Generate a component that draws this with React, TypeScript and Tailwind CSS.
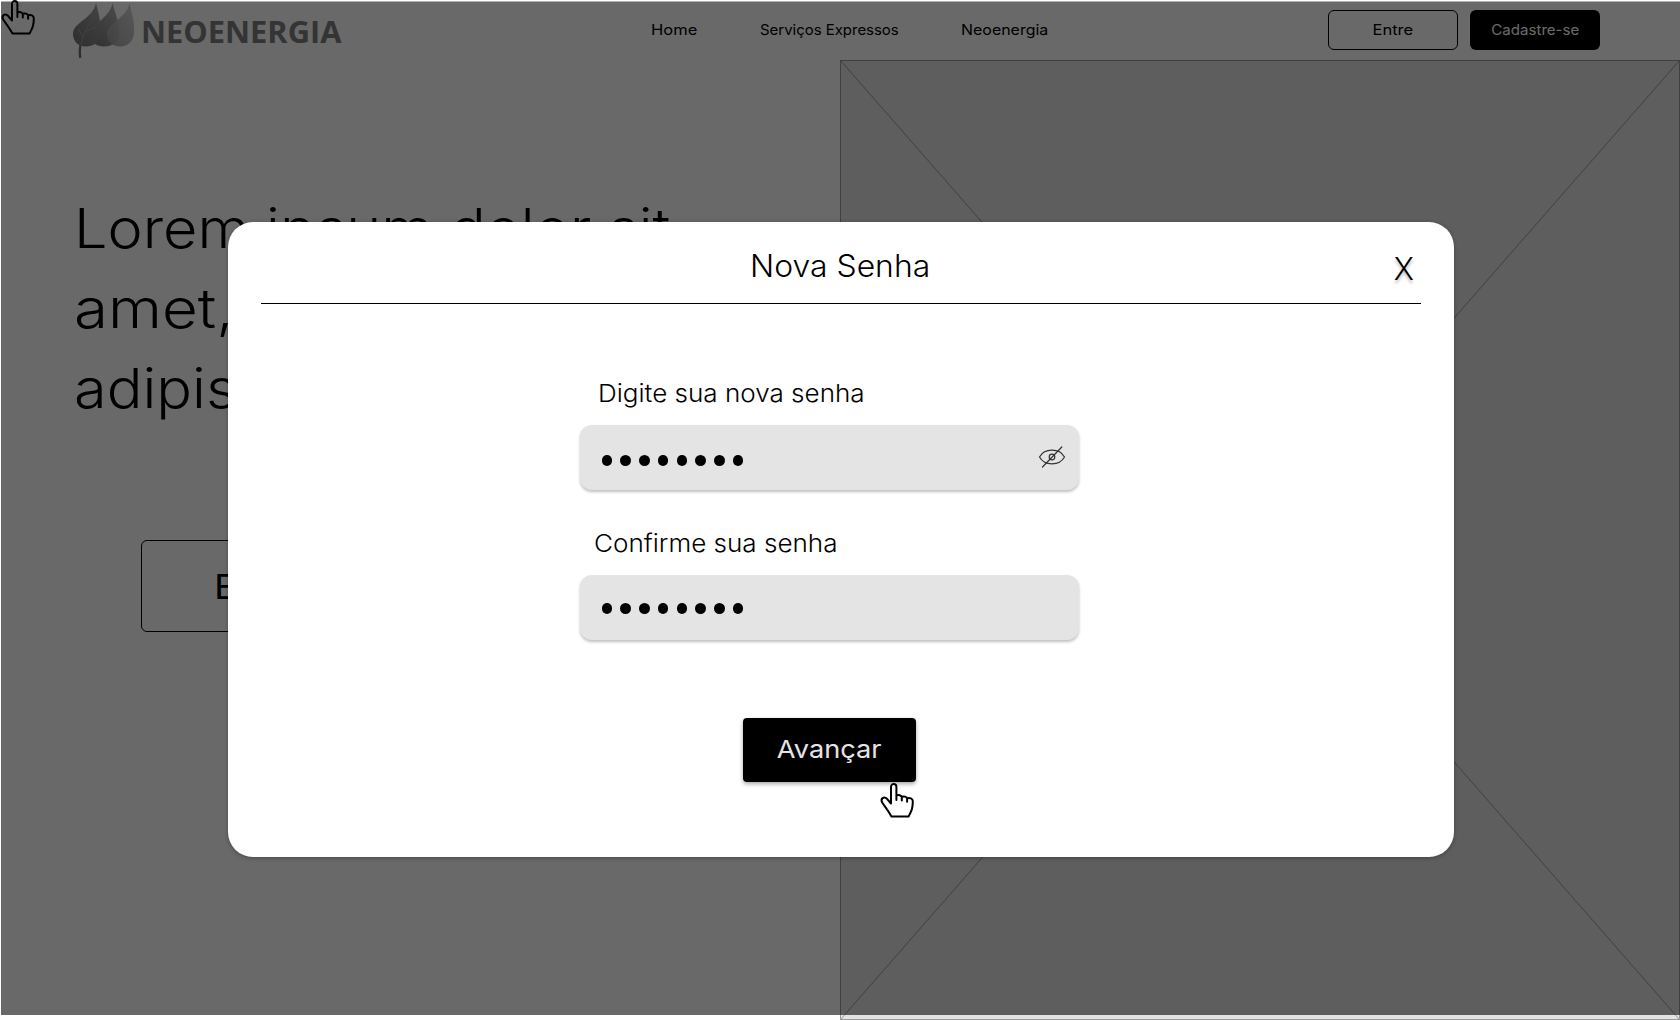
import React from "react";

function HandCursor({ className }: { className?: string }) {
  return (
    <svg className={className} width="36" height="36" viewBox="0 0 36 36" fill="none" stroke="#000" strokeWidth="2" strokeLinejoin="round" strokeLinecap="round">
      <path
        fill="#fff"
        stroke="none"
        d="M12 20V4a2.7 2.7 0 0 1 5.4 0v8.5c2-1 5-.5 5.4 1.3c2-.8 5-.2 5.3 1.5c2.5-.8 5.6 0 5.6 3C33.7 25 33 27 29.5 33.6H12.5C9.5 28 6 24 3.2 19.5C1 15.5 5 13 8 15.8Z"
      />
      <path d="M12 20.5V3.8a2.7 2.7 0 0 1 5.4 0V17M17.4 12.5c2-.9 5-.5 5.4 1.5v3.6M22.8 13.8c2-.8 5-.2 5.3 1.7v3.2M28.1 15.3c2.5-.8 5.7 0 5.7 3C33.8 25 33 27 29.5 33.6H12.5C9.5 28 6 24 3.2 19.5C1 15.5 5 13 8 15.8L12 20.5" />
    </svg>
  );
}

function Leaves() {
  return (
    <svg className="block" width="66" height="58" viewBox="0 0 66 58">
      <defs>
        <linearGradient id="leafA" x1="0" y1="1" x2="0.8" y2="0">
          <stop offset="0" stopColor="#707070" />
          <stop offset="1" stopColor="#a0a0a0" />
        </linearGradient>
        <linearGradient id="leafB" x1="0" y1="1" x2="0.6" y2="0">
          <stop offset="0" stopColor="#767676" />
          <stop offset="1" stopColor="#b0b0b0" />
        </linearGradient>
        <linearGradient id="leafC" x1="0" y1="1" x2="0.8" y2="0">
          <stop offset="0" stopColor="#a0a0a0" />
          <stop offset="1" stopColor="#cccccc" />
        </linearGradient>
      </defs>
      <path fill="url(#leafB)" d="M40.500 3C43 13 47.500 22 47 34C46 42 40 46.500 32 46.500C23 46.500 18 41 18.500 34C19 24 38 18 40.500 3Z" />
      <path fill="url(#leafC)" fillOpacity="0.9" d="M57.500 3C59.500 13 63 22 62 34C61 42 55 46.500 48 46.500C40 46.500 34.500 41 35 34C36 22 55 18 57.500 3Z" />
      <path fill="url(#leafA)" d="M24 3C26.500 13 29.500 23 28 34C27 42 22 46.500 14 46.500C6 46.500 1 41 1 34C1 22 21 19 24 3Z" />
      <path fill="none" stroke="#a0a0a0" strokeWidth="1" d="M9 45C11 34 16 26 22 15M11 36L6 29M14 31L24 27" />
      <path fill="none" stroke="#707070" strokeWidth="2.300" d="M8.500 45C7.600 49 7.600 53 8.200 58" />
    </svg>
  );
}

function EyeOff() {
  return (
    <svg width="28" height="24" viewBox="0 0 28 24" fill="none" stroke="#333" strokeWidth="1.200" strokeLinecap="round">
      <path d="M1.500 12C4 7.500 9 5.200 14 5.200S24 7.500 26.500 12C24 16.500 19 18.800 14 18.800S4 16.500 1.500 12Z" />
      <circle cx="14" cy="12" r="2.800" />
      <path d="M4.500 22L23.800 2" />
    </svg>
  );
}

function Dots() {
  return (
    <div className="flex gap-[8.250px]">
      {Array.from({ length: 8 }, (_, i) => (
        <span key={i} className="size-[10.500px] rounded-full bg-black" />
      ))}
    </div>
  );
}

export default function App() {
  return (
    <div className="relative h-[1020px] w-[1680px] overflow-hidden bg-white font-['Inter',sans-serif] text-black">
      <header className="flex h-[60px] items-start">
        <HandCursor className="h-[36px] w-[36px] shrink-0" />
        <div className="ml-[36px] flex w-[270px] shrink-0">
          <Leaves />
          <span className="ml-[3px] mt-[12px] inline-block origin-left scale-x-[1.044] font-['Open_Sans',sans-serif] text-[29.500px] leading-[40px] font-bold text-[#7e7e7e]">
            NEOENERGIA
          </span>
        </div>
        <nav className="mt-[15px] flex pl-[309px] text-[14.500px] leading-[30px]">
          <span className="w-[109px]"><span className="inline-block origin-left scale-x-[1.140]">Home</span></span>
          <span className="w-[201px]"><span className="inline-block origin-left scale-x-[1.030]">Serviços Expressos</span></span>
          <span className="w-[100px]"><span className="inline-block origin-left scale-x-[1.100]">Neoenergia</span></span>
        </nav>
        <div className="mt-[10px] ml-[267px] flex gap-[12px] text-[14.500px]">
          <button className="h-[40px] w-[130px] rounded-[6px] border border-black"><span className="inline-block scale-x-[1.140]">Entre</span></button>
          <button className="h-[40px] w-[130px] rounded-[6px] bg-black text-white"><span className="inline-block scale-x-[1.040]">Cadastre-se</span></button>
        </div>
      </header>

      <main className="flex h-[960px]">
        <section className="w-[840px] pt-[128px]">
          <h1 className="ml-[74px] text-[54.500px] leading-[80px] font-[340] whitespace-nowrap">
            <span className="block w-fit origin-left scale-x-[1.090]">Lorem ipsum dolor sit</span>
            <span className="block w-fit origin-left scale-x-[1.135]">amet, consectetur</span>
            <span className="block w-fit origin-left scale-x-[1.090]">adipiscing elit.</span>
          </h1>
          <button className="mt-[112px] ml-[141px] h-[92px] w-[246px] rounded-[6px] border border-black text-[34px]">
            <span className="mr-[6px] inline-block scale-x-[1.120]">Entre</span>
          </button>
        </section>
        <section className="h-[960px] w-[840px] border border-[#9b9b9b] bg-[#e4e4e4]">
          <svg className="block" width="838" height="958" viewBox="0 0 838 958" stroke="#9b9b9b" fill="none">
            <path d="M0 0L838 958M838 0L0 958" />
          </svg>
        </section>
      </main>

      <div className="absolute top-[1px] right-0 bottom-[5px] left-px border-t border-black/30 bg-black/[0.588] bg-clip-padding" />

      <div className="absolute top-[222px] left-[228px] h-[635px] w-[1226px] rounded-[25px] bg-white shadow-[0_1px_4px_rgba(0,0,0,0.300)]">
        <div className="mx-[33px] grid h-[82px] grid-cols-[1fr_auto_1fr] border-b border-black pt-[26px]">
          <span />
          <h2 className="mr-[1px] inline-block scale-x-[1.045] text-[30.500px] leading-[36px] font-[340]">Nova Senha</h2>
          <button className="mt-[3px] mr-[7px] h-[36px] justify-self-end text-[30.500px] leading-[36px] font-[340] [text-shadow:0_3px_3px_rgba(0,0,0,0.250)]">X</button>
        </div>
        <form className="ml-[352px] w-[499px] pt-[73px]">
          <label className="block h-[48px] pl-[18px] text-[24.500px] leading-[32px] font-[340]">
            <span className="inline-block origin-left scale-x-[1.063]">Digite sua nova senha</span>
          </label>
          <div className="flex h-[65px] items-center justify-between rounded-[12px] bg-[#e4e4e4] pt-[6px] pr-[13px] pl-[21.500px] shadow-[0_2px_3px_rgba(0,0,0,0.250)]">
            <Dots />
            <span className="-mt-[7px]"><EyeOff /></span>
          </div>
          <label className="mt-[37px] block h-[48px] pl-[14px] text-[24.500px] leading-[32px] font-[340]">
            <span className="inline-block origin-left scale-x-[1.063]">Confirme sua senha</span>
          </label>
          <div className="flex h-[65px] items-center rounded-[12px] bg-[#e4e4e4] pt-[2px] pl-[21.500px] shadow-[0_2px_3px_rgba(0,0,0,0.250)]">
            <Dots />
          </div>
          <button type="button" className="mt-[78px] ml-[163px] block h-[64px] w-[173px] rounded-[4px] bg-black pb-[1px] text-[24.500px] text-[#e4e4e4] shadow-[0_2px_4px_rgba(0,0,0,0.350)]">
            <span className="mr-[1px] inline-block scale-x-[1.110]">Avançar</span>
          </button>
        </form>
        <HandCursor className="absolute top-[561px] left-[651px]" />
      </div>
    </div>
  );
}
